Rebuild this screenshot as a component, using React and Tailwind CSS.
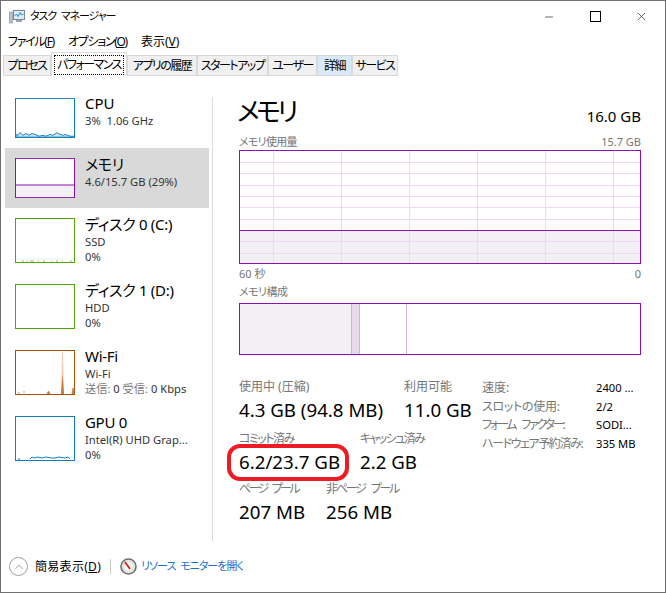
import React from 'react';
import { Minus, X, ChevronUp } from 'lucide-react';

const tabs = [
    { label: 'プロセス', w: 'w-[48px]' },
    { label: 'パフォーマンス', w: 'w-[76px]', active: true },
    { label: 'アプリの履歴', w: 'w-[70px]' },
    { label: 'スタートアップ', w: 'w-[71px]' },
    { label: 'ユーザー', w: 'w-[49px]' },
    { label: '詳細', w: 'w-[35px]', hover: true },
    { label: 'サービス', w: 'w-[46px]' },
];

function Thumb({ color, h = 'h-[45px]', children }) {
    return (
        <svg width="60" viewBox="0 0 60 45" preserveAspectRatio="none" className={`${h} shrink-0 bg-white`}>
            {children}
            <rect x="0.5" y="0.5" width="59" height="44" fill="none" stroke={color} />
        </svg>
    );
}

function SideItem({ thumb, title, children, active }) {
    return (
        <div className={`flex h-[60px] w-[204px] items-start pl-[10px] ${active ? 'bg-[#d9d9d9]' : ''}`}>
            <div className="pt-[10px]">{thumb}</div>
            <div className="ml-[10px] pt-[6px]">
                <div className="text-[15px] leading-[20px] tracking-[-0.3px] text-black">{title}</div>
                <div className="text-[11.2px] leading-[15px] text-[#333]">{children}</div>
            </div>
        </div>
    );
}

function Stat({ label, value, w, track = '' }) {
    return (
        <div className={w}>
            <div className={`text-[12px] leading-[16px] whitespace-nowrap text-[#767676] ${track}`}>{label}</div>
            <div className="mt-[3px] text-[18.7px] leading-[24px] whitespace-nowrap text-black">{value}</div>
        </div>
    );
}

function MemoryGraph() {
    const xs = [34, 102, 170, 238, 306, 374];
    const ys = [12, 23, 35, 46, 57, 69, 91, 103];
    return (
        <svg width="402" height="114" viewBox="0 0 402 114" className="block">
            <rect x="0" y="80" width="402" height="34" fill="#f3f0f5" />
            {xs.map(x => <line key={x} x1={x + 0.5} x2={x + 0.5} y1="0" y2="114" stroke="#ecd9f2" />)}
            {ys.map(y => <line key={y} x1="0" x2="402" y1={y + 0.5} y2={y + 0.5} stroke="#ecd9f2" />)}
            <line x1="0" x2="402" y1="80.5" y2="80.5" stroke="#8b12ae" />
            <rect x="0.5" y="0.5" width="401" height="113" fill="none" stroke="#8b12ae" />
        </svg>
    );
}

export default function App() {
    return (
        <div className="relative flex h-[593px] w-[666px] flex-col overflow-hidden border border-[#707070] bg-white font-[Noto_Sans,Noto_Sans_CJK_JP,sans-serif] [font-feature-settings:'palt'] text-black">
            {/* Title bar */}
            <div className="flex h-[31px] items-center pl-[8px]">
                <svg width="16" height="16" viewBox="0 0 16 16" className="shrink-0">
                    <rect x="0.5" y="3" width="3" height="11" fill="#b9c2c9" stroke="#7d8991" strokeWidth="0.6" />
                    <rect x="4.5" y="1.5" width="11" height="9" fill="#d9ecf8" stroke="#7d8991" />
                    <path d="M5.5 7 L7.5 5 L9 7.5 L11 3.5 L12.5 6 L14.5 5" fill="none" stroke="#2b8fd0" strokeWidth="1" />
                    <rect x="7" y="11" width="6" height="2" fill="#9aa5ad" />
                </svg>
                <span className="ml-[5px] text-[11px] tracking-[-1.1px] [word-spacing:3px]">タスク マネージャー</span>
                <div className="ml-auto flex items-center">
                    <Minus className="mr-[35px] h-[12px] w-[12px]" strokeWidth={1.2} />
                    <div className="mr-[34px] h-[11px] w-[11px] border border-black" />
                    <X className="mr-[17px] h-[13px] w-[13px]" strokeWidth={1.1} />
                </div>
            </div>

            {/* Menu */}
            <div className="flex h-[20px] items-center gap-[14px] pl-[7px] text-[12px]">
                <span className="tracking-[-1.3px]">ファイル(<u>F</u>)</span>
                <span className="tracking-[-1.3px]">オプション(<u>O</u>)</span>
                <span>表示(<u>V</u>)</span>
            </div>

            {/* Tabs */}
            <div className="flex h-[24px] items-end pl-[2px] text-[12px] tracking-[-1.5px]">
                {tabs.map(t => (
                    <div
                        key={t.label}
                        className={`flex items-center justify-center border border-[#d9d9d9] whitespace-nowrap ${t.w} ${t.active ? 'h-[24px] border-b-0 bg-white' : t.hover ? 'h-[21px] bg-[#d8eaf9]' : 'h-[21px] bg-[#f0f0f0]'}`}
                    >
                        {t.active ? <span className="border border-dotted border-black px-[2px] leading-[18px]">{t.label}</span> : t.label}
                    </div>
                ))}
            </div>

            {/* Body */}
            <div className="flex h-[465px]">
                <div className="ml-[4px] w-[204px] pt-[12px]">
                    <div className="flex h-[60px] items-start pl-[10px]">
                        <div className="pt-[10px]">
                            <Thumb color="#117dbb" h="h-[40px]">
                                <path d="M1 44 L1 41 L3 42 L5 39 L8 42 L11 40 L14 42 L17 40 L20 41 L24 43 L28 42 L31 43 L35 41 L38 42 L42 39 L45 41 L48 42 L50 41 L55 43 L59 43 L59 44 Z" fill="#d3e8f5" stroke="#117dbb" strokeWidth="1" />
                            </Thumb>
                        </div>
                        <div className="ml-[10px] pt-[5px]">
                            <div className="text-[15px] leading-[20px]">CPU</div>
                            <div className="text-[11.2px] leading-[16px] text-[#333]">3%&nbsp; 1.06 GHz</div>
                        </div>
                    </div>
                    <SideItem
                        active
                        title="メモリ"
                        thumb={
                            <Thumb color="#8b12ae" h="h-[40px]">
                                <rect x="0" y="30" width="60" height="15" fill="#f3f0f5" />
                                <line x1="0" x2="60" y1="30.5" y2="30.5" stroke="#8b12ae" strokeWidth="1.1" />
                            </Thumb>
                        }
                    >
                        4.6/15.7 GB (29%)
                    </SideItem>
                    <div className="flex flex-col gap-[6px]">
                        <SideItem
                            title="ディスク 0 (C:)"
                            thumb={
                                <Thumb color="#4da60c">
                                    <path d="M7 43h2M12 43h1M15 43h4M23 43h1M28 43h2M36 43h1M41 43h2M47 43h1M55 43h2" stroke="#8cc65e" />
                                </Thumb>
                            }
                        >
                            SSD<br />0%
                        </SideItem>
                        <SideItem title="ディスク 1 (D:)" thumb={<Thumb color="#4da60c" />}>
                            HDD<br />0%
                        </SideItem>
                        <SideItem
                            title="Wi-Fi"
                            thumb={
                                <Thumb color="#a74f01">
                                    <path d="M46 44 L47 2 L48 2 L49 44 Z" fill="#f2cdb5" />
                                    <path d="M46 44 L47.5 24 L49 44 Z" fill="#c47a3c" />
                                    <path d="M3 43h2M8 42h2M32 44 L33.5 41 L35 44 Z M57 44 L58 38 L59 44 Z" stroke="#c47a3c" fill="#c47a3c" strokeWidth="0.8" />
                                </Thumb>
                            }
                        >
                            Wi-Fi<br />
                            <span className="text-[#767676]">送信: </span>0 <span className="text-[#767676]">受信: </span>0 Kbps
                        </SideItem>
                        <SideItem
                            title="GPU 0"
                            thumb={
                                <Thumb color="#117dbb">
                                    <path d="M3 43h2M15 43 L17 41 L19 42 L23 41 L27 42 L31 41 L36 42 L40 42 L44 41 L50 42 L53 41 L55 43" fill="none" stroke="#117dbb" strokeWidth="1" />
                                </Thumb>
                            }
                        >
                            Intel(R) UHD Grap...<br />0%
                        </SideItem>
                    </div>
                </div>

                <div className="mt-[21px] ml-[3px] w-px bg-[#d9d9d9]" />

                {/* Detail pane */}
                <div className="ml-[26px] w-[402px] pt-[16px]">
                    <div className="flex h-[38px] items-end justify-between">
                        <span className="-ml-[2px] text-[26px] leading-[38px] tracking-[-3.6px]">メモリ</span>
                        <span className="pb-[2px] text-[15px] leading-[24px]">16.0 GB</span>
                    </div>
                    <div className="mt-[4px] flex h-[16px] items-center justify-between text-[11px] text-[#767676]">
                        <span className="tracking-[-0.7px]">メモリ使用量</span>
                        <span>15.7 GB</span>
                    </div>
                    <div><MemoryGraph /></div>
                    <div className="mt-[2px] flex h-[16px] items-center justify-between text-[11px] text-[#767676]">
                        <span>60 秒</span>
                        <span>0</span>
                    </div>
                    <div className="mt-[2px] h-[16px] text-[11px] leading-[16px] tracking-[-0.5px] text-[#767676]">メモリ構成</div>
                    <div className="mt-[3px] flex h-[52px] border border-[#8b12ae]">
                        <div className="w-[112px] border-r border-[#d3b1de] bg-[#f3f0f5]" />
                        <div className="w-[8px] border-r border-[#d3b1de] bg-[#e8d8ee]" />
                        <div className="w-[47px] border-r border-[#d3b1de]" />
                    </div>

                    <div className="mt-[24px] flex">
                        <div className="w-[243px]">
                            <div className="flex">
                                <Stat w="w-[165px]" label="使用中 (圧縮)" value="4.3 GB (94.8 MB)" />
                                <Stat label="利用可能" value="11.0 GB" />
                            </div>
                            <div className="mt-[9px] flex">
                                <Stat w="w-[121px]" track="tracking-[-1.5px]" label="コミット済み" value="6.2/23.7 GB" />
                                <Stat track="tracking-[-1.6px]" label="キャッシュ済み" value="2.2 GB" />
                            </div>
                            <div className="mt-[7px] flex">
                                <Stat w="w-[87px]" track="tracking-[-2.7px] [word-spacing:5px]" label="ページ プール" value="207 MB" />
                                <Stat track="tracking-[-2.2px] [word-spacing:5px]" label="非ページ プール" value="256 MB" />
                            </div>
                        </div>
                        <div className="grid grid-cols-[114px_auto] content-start self-start text-[11.2px] leading-[18.5px] whitespace-nowrap">
                            <span className="text-[12px] text-[#767676]">速度:</span><span>2400 ...</span>
                            <span className="text-[12px] tracking-[-0.3px] text-[#767676]">スロットの使用:</span><span>2/2</span>
                            <span className="text-[12px] tracking-[-2.2px] [word-spacing:5px] text-[#767676]">フォーム ファクター:</span><span>SODI...</span>
                            <span className="text-[12px] tracking-[-1.4px] text-[#767676]">ハードウェア予約済み:</span><span>335 MB</span>
                        </div>
                    </div>
                </div>
            </div>

            {/* Footer */}
            <div className="flex flex-1 items-center pl-[8px] text-[12px]">
                <div className="flex h-[19px] w-[19px] items-center justify-center rounded-full border border-[#a0a0a0]">
                    <ChevronUp className="h-[14px] w-[14px] text-[#8a8a8a]" strokeWidth={1.5} />
                </div>
                <span className="ml-[7px] tracking-[0.3px]">簡易表示(<u>D</u>)</span>
                <div className="ml-[9px] h-[15px] w-px bg-[#c8c8c8]" />
                <svg width="17" height="17" viewBox="0 0 17 17" className="ml-[9px] shrink-0">
                    <circle cx="8.5" cy="8.5" r="7.5" fill="#efece6" stroke="#6e6e6e" strokeWidth="1.6" />
                    <circle cx="8.5" cy="8.5" r="5" fill="#fbfaf6" stroke="#c9c3b6" strokeWidth="0.6" />
                    <path d="M5 4 L10 11" stroke="#d4202a" strokeWidth="1.8" />
                </svg>
                <span className="ml-[4px] text-[11px] tracking-[-1px] [word-spacing:3px] text-[#1a6fc9]">リソース モニターを開く</span>
            </div>

            {/* Red marker drawn over the commit value */}
            <svg width="128" height="42" viewBox="0 0 128 42" className="absolute top-[441px] left-[225px]">
                <rect x="3" y="4" width="118" height="33" rx="11" fill="none" stroke="#ed1c24" strokeWidth="4" />
            </svg>
        </div>
    );
}
